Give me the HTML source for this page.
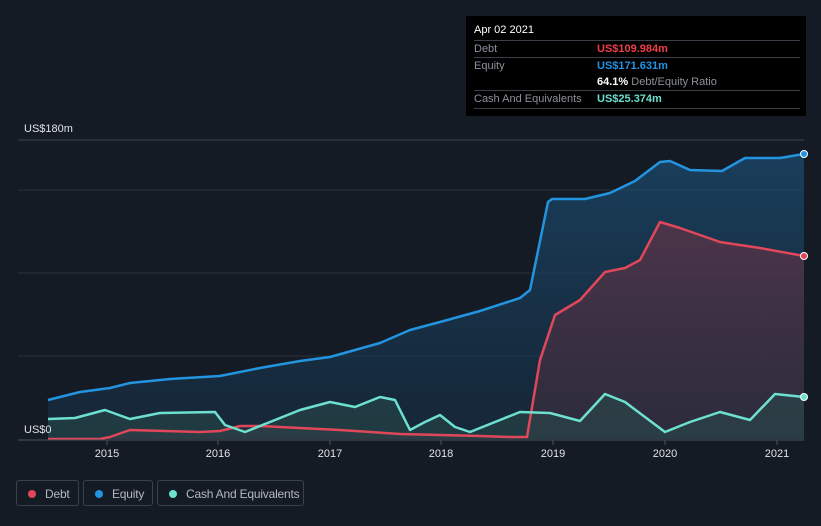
<!DOCTYPE html>
<html><head><style>
body{margin:0;width:821px;height:526px;background:#151b25;font-family:"Liberation Sans",sans-serif;overflow:hidden;position:relative}
.tt{position:absolute;left:466px;top:16px;width:340px;height:100px;background:#000;font-size:11px}
.row{position:absolute;left:8px;right:6px;border-top:1px solid #3a3f47;color:#8d9199}
.leg{position:absolute;top:480px;height:26px;border:1px solid #3b414b;border-radius:3px;color:#b4b8bf;font-size:12px;line-height:26px;box-sizing:border-box;white-space:nowrap;overflow:hidden}
.leg i{position:absolute;left:11px;top:9px;width:8px;height:8px;border-radius:50%}
.leg span{position:absolute;left:28px;top:0;letter-spacing:-0.2px}
</style></head><body>
<svg width="821" height="526" style="position:absolute;left:0;top:0">
<defs>
<linearGradient id="ge" x1="0" y1="0" x2="0" y2="1"><stop offset="0" stop-color="#1b4a6e" stop-opacity=".75"/><stop offset="1" stop-color="#16324a" stop-opacity=".5"/></linearGradient>
<linearGradient id="gd" x1="0" y1="0" x2="0" y2="1"><stop offset="0" stop-color="#5a3347" stop-opacity=".8"/><stop offset="1" stop-color="#3a2f3e" stop-opacity=".6"/></linearGradient>
</defs>
<line x1="18" y1="140" x2="804" y2="140" stroke="#3d434d"/>
<line x1="18" y1="190" x2="804" y2="190" stroke="#2a303a"/>
<line x1="18" y1="273" x2="804" y2="273" stroke="#2a303a"/>
<line x1="18" y1="356" x2="804" y2="356" stroke="#2a303a"/>
<path d="M48,400 L80,392 110,388 130,383 170,379 220,376 260,368 300,361 330,357 380,343 410,330 440,322 480,311 520,298 530,290 548,202 552,199 585,199 610,193 635,181 660,162 670,161 690,170 722,171 745,158 780,158 804,154 L804,439 48,439Z" fill="url(#ge)"/>
<path d="M48,439 L100,439 110,437 130,430 200,432 220,431 240,426 260,426 300,428 340,430 400,434 480,436 510,437 527,437 540,360 555,315 580,300 605,272 625,268 640,260 660,222 680,228 720,242 760,248 804,256 L804,439Z" fill="url(#gd)"/>
<path d="M48,419 L75,418 105,410 130,419 160,413 215,412 225,425 245,432 270,422 300,410 330,402 355,407 380,397 395,400 410,430 425,422 440,415 455,427 470,432 490,424 520,412 550,413 580,421 605,394 625,402 665,432 690,422 720,412 750,420 775,394 804,397 L804,439 48,439Z" fill="#2a4a4a" fill-opacity=".55"/>
<path d="M48,400 L80,392 110,388 130,383 170,379 220,376 260,368 300,361 330,357 380,343 410,330 440,322 480,311 520,298 530,290 548,202 552,199 585,199 610,193 635,181 660,162 670,161 690,170 722,171 745,158 780,158 804,154" fill="none" stroke="#2394df" stroke-width="2.5" stroke-linejoin="round"/>
<path d="M48,439 L100,439 110,437 130,430 200,432 220,431 240,426 260,426 300,428 340,430 400,434 480,436 510,437 527,437 540,360 555,315 580,300 605,272 625,268 640,260 660,222 680,228 720,242 760,248 804,256" fill="none" stroke="#e0475a" stroke-width="2.5" stroke-linejoin="round"/>
<path d="M48,419 L75,418 105,410 130,419 160,413 215,412 225,425 245,432 270,422 300,410 330,402 355,407 380,397 395,400 410,430 425,422 440,415 455,427 470,432 490,424 520,412 550,413 580,421 605,394 625,402 665,432 690,422 720,412 750,420 775,394 804,397" fill="none" stroke="#6de0d0" stroke-width="2.5" stroke-linejoin="round"/>
<line x1="18" y1="440" x2="804" y2="440" stroke="#4a505a"/>
<g stroke="#4a505a"><line x1="107" y1="440" x2="107" y2="445"/><line x1="218" y1="440" x2="218" y2="445"/><line x1="330" y1="440" x2="330" y2="445"/><line x1="441" y1="440" x2="441" y2="445"/><line x1="553" y1="440" x2="553" y2="445"/><line x1="665" y1="440" x2="665" y2="445"/><line x1="777" y1="440" x2="777" y2="445"/></g>
<circle cx="804" cy="154" r="3.5" fill="#2394df" stroke="#fff" stroke-width="1"/>
<circle cx="804" cy="256" r="3.5" fill="#e0475a" stroke="#fff" stroke-width="1"/>
<circle cx="804" cy="397" r="3.5" fill="#6de0d0" stroke="#fff" stroke-width="1"/>
<g fill="#dfe2e6" font-size="11" font-family="Liberation Sans" text-anchor="middle"><text x="107" y="457">2015</text><text x="218" y="457">2016</text><text x="330" y="457">2017</text><text x="441" y="457">2018</text><text x="553" y="457">2019</text><text x="665" y="457">2020</text><text x="777" y="457">2021</text></g>
<text x="24" y="132" fill="#dfe2e6" font-size="11">US$180m</text>
<text x="24" y="433" fill="#dfe2e6" font-size="11">US$0</text>
</svg>
<div class="tt">
<div style="position:absolute;left:8px;top:8px;color:#fff">Apr 02 2021</div>
<div class="row" style="top:24px;height:16px"><span style="position:absolute;top:2px">Debt</span><span style="position:absolute;left:123px;top:2px;color:#ef3e48;font-weight:bold">US$109.984m</span></div>
<div class="row" style="top:41px;height:33px"><span style="position:absolute;top:2px">Equity</span><span style="position:absolute;left:123px;top:2px;color:#1f93e4;font-weight:bold">US$171.631m</span><span style="position:absolute;left:123px;top:18px"><b style="color:#fff">64.1%</b> Debt/Equity Ratio</span></div>
<div class="row" style="top:74px;height:17px;border-bottom:1px solid #3a3f47"><span style="position:absolute;top:2px">Cash And Equivalents</span><span style="position:absolute;left:123px;top:2px;color:#6de0d0;font-weight:bold">US$25.374m</span></div>
</div>
<div class="leg" style="left:16px;width:63px"><i style="background:#e0475a"></i><span>Debt</span></div>
<div class="leg" style="left:83px;width:70px"><i style="background:#2394df"></i><span>Equity</span></div>
<div class="leg" style="left:157px;width:147px"><i style="background:#6de0d0"></i><span>Cash And Equivalents</span></div>
</body></html>
